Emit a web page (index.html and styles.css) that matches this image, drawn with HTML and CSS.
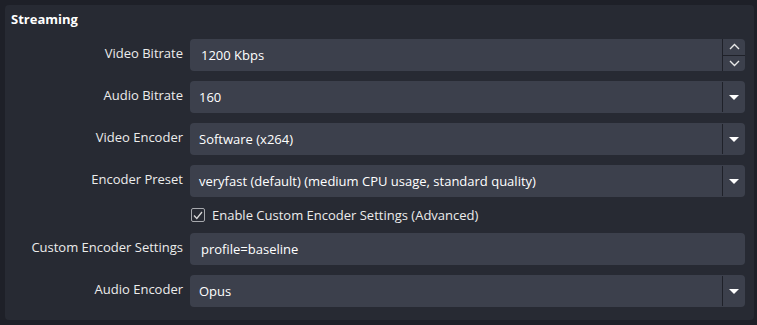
FILE: index.html
```html
<!DOCTYPE html>
<html lang="en">
<head>
    <meta charset="UTF-8">
    <title>Streaming</title>
    <link rel="stylesheet" href="styles.css">
</head>
<body>
    <div class="panel">
        <h2 class="title">Streaming</h2>
        <div class="form">
            <label class="label">Video Bitrate</label>
            <div class="field spin">
                <span class="value">1200 Kbps</span>
                <div class="spin-buttons">
                    <div class="spin-btn">
                        <svg width="11" height="7" viewBox="0 0 11 7"><path d="M1 6 L5.5 1.5 L10 6" fill="none" stroke="#e8e8e8" stroke-width="1.4"/></svg>
                    </div>
                    <div class="spin-btn">
                        <svg width="11" height="7" viewBox="0 0 11 7"><path d="M1 1 L5.5 5.5 L10 1" fill="none" stroke="#e8e8e8" stroke-width="1.4"/></svg>
                    </div>
                </div>
            </div>

            <label class="label">Audio Bitrate</label>
            <div class="field combo">
                <span class="value">160</span>
                <div class="arrow"><span class="tri"></span></div>
            </div>

            <label class="label">Video Encoder</label>
            <div class="field combo">
                <span class="value">Software (x264)</span>
                <div class="arrow"><span class="tri"></span></div>
            </div>

            <label class="label">Encoder Preset</label>
            <div class="field combo">
                <span class="value">veryfast (default) (medium CPU usage, standard quality)</span>
                <div class="arrow"><span class="tri"></span></div>
            </div>

            <div></div>
            <div class="check-row">
                <span class="checkbox">
                    <svg width="10" height="9" viewBox="0 0 10 9"><path d="M1 4.5 L3.8 7.5 L9 1" fill="none" stroke="#d8d8d8" stroke-width="1.3"/></svg>
                </span>
                <span class="check-text">Enable Custom Encoder Settings (Advanced)</span>
            </div>

            <label class="label">Custom Encoder Settings</label>
            <div class="field text">
                <span class="value">profile=baseline</span>
            </div>

            <label class="label">Audio Encoder</label>
            <div class="field combo">
                <span class="value">Opus</span>
                <div class="arrow"><span class="tri"></span></div>
            </div>
        </div>
    </div>
</body>
</html>
```

FILE: styles.css
```css
body {
    margin: 0;
    background-color: #1e2028;
    font-family: "Open Sans", "Noto Sans", sans-serif;
    font-size: 13px;
    color: #f0f0f0;
}
.panel {
    margin: 5px 0 0 5px;
    width: 749px;
    height: 315px;
    background-color: #272a33;
    border-radius: 4px;
    box-sizing: border-box;
    padding: 4px 9px 0 0;
}
.title {
    margin: 0 0 0 6px;
    font-size: 13px;
    font-weight: 700;
    line-height: 20px;
    height: 30px;
    color: #ffffff;
}
.form {
    display: grid;
    grid-template-columns: 178px 1fr;
    column-gap: 7px;
    row-gap: 10px;
}
.label {
    text-align: right;
    align-self: center;
    padding-bottom: 4px;
    color: #ececec;
    white-space: nowrap;
}
.field {
    height: 32px;
    background-color: #3c404c;
    border-radius: 4px;
    display: flex;
    align-items: center;
    color: #ffffff;
}
.value {
    flex: 1;
    padding-left: 9px;
    white-space: nowrap;
}
.text .value {
    padding-left: 11px;
}
.spin .value {
    padding-left: 11px;
}
.arrow {
    width: 22px;
    height: 30px;
    border-left: 1px solid #1f2129;
    display: flex;
    align-items: center;
    justify-content: center;
}
.tri {
    width: 0;
    height: 0;
    border-left: 5px solid transparent;
    border-right: 5px solid transparent;
    border-top: 5px solid #ffffff;
}
.spin-buttons {
    width: 22px;
    height: 32px;
    border-left: 1px solid #1f2129;
    display: flex;
    flex-direction: column;
}
.spin-btn {
    flex: 1;
    display: flex;
    align-items: center;
    justify-content: center;
}
.spin-btn:first-child {
    border-bottom: 1px solid #1f2129;
}
.check-row {
    height: 16px;
    display: flex;
    align-items: center;
    gap: 7px;
    padding-left: 1px;
}
.checkbox {
    width: 12px;
    height: 12px;
    border: 1px solid #a7a9ae;
    border-radius: 2px;
    display: flex;
    align-items: center;
    justify-content: center;
}
.check-text {
    color: #ececec;
}
```
